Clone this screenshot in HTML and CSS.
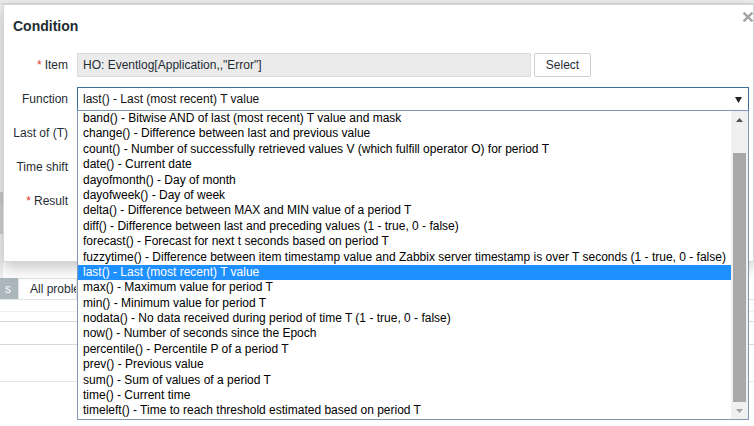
FILE: index.html
```html
<!DOCTYPE html>
<html>
<head>
<meta charset="utf-8">
<link rel="stylesheet" href="styles.css">
</head>
<body>
<div class="page">
  <div class="page-top"></div>
  <div class="page-body">
    <div class="page-side"><span class="side-block"></span><span class="side-mark"></span></div>
  </div>
  <div class="tabs">
    <span class="tab tab-active">s</span>
    <span class="tab tab-clip">All proble</span>
  </div>
  <div class="rows">
    <div class="row-line r1"></div>
    <div class="row-line r2"></div>
    <div class="row-line r3"></div>
    <div class="row-line r4"></div>
  </div>
</div>

<div class="dialog">
  <div class="dialog-head">
    <span class="dialog-title">Condition</span>
    <span class="dialog-close"><svg width="10" height="10" viewBox="0 0 10 10"><path d="M1.5 1.5 L8.5 8.5 M8.5 1.5 L1.5 8.5" stroke="#a3a3a3" stroke-width="2.4" stroke-linecap="square"/></svg></span>
  </div>
  <div class="form">
    <label class="form-label"><span class="req">*</span> Item</label>
    <div class="form-field">
      <div class="text-input readonly">HO: Eventlog[Application,,"Error"]</div>
      <button class="btn">Select</button>
    </div>
    <label class="form-label">Function</label>
    <div class="form-field">
      <div class="select-box">
        <span>last() - Last (most recent) T value</span>
        <svg class="select-arrow" width="7" height="6" viewBox="0 0 7 6"><path d="M0 0 H7 L3.5 6 Z" fill="#222"/></svg>
      </div>
    </div>
    <label class="form-label">Last of (T)</label>
    <div class="form-field"></div>
    <label class="form-label">Time shift</label>
    <div class="form-field"></div>
    <label class="form-label"><span class="req">*</span> Result</label>
    <div class="form-field"></div>
  </div>
</div>

<div class="listbox">
  <ul class="options">
    <li>band() - Bitwise AND of last (most recent) T value and mask</li>
    <li>change() - Difference between last and previous value</li>
    <li>count() - Number of successfully retrieved values V (which fulfill operator O) for period T</li>
    <li>date() - Current date</li>
    <li>dayofmonth() - Day of month</li>
    <li>dayofweek() - Day of week</li>
    <li>delta() - Difference between MAX and MIN value of a period T</li>
    <li>diff() - Difference between last and preceding values (1 - true, 0 - false)</li>
    <li>forecast() - Forecast for next t seconds based on period T</li>
    <li>fuzzytime() - Difference between item timestamp value and Zabbix server timestamp is over T seconds (1 - true, 0 - false)</li>
    <li class="selected">last() - Last (most recent) T value</li>
    <li>max() - Maximum value for period T</li>
    <li>min() - Minimum value for period T</li>
    <li>nodata() - No data received during period of time T (1 - true, 0 - false)</li>
    <li>now() - Number of seconds since the Epoch</li>
    <li>percentile() - Percentile P of a period T</li>
    <li>prev() - Previous value</li>
    <li>sum() - Sum of values of a period T</li>
    <li>time() - Current time</li>
    <li>timeleft() - Time to reach threshold estimated based on period T</li>
  </ul>
  <div class="scrollbar">
    <div class="sb-btn"><svg width="7" height="4" viewBox="0 0 7 4"><path d="M0 4 H7 L3.5 0 Z" fill="#505050"/></svg></div>
    <div class="sb-track"><div class="sb-thumb"></div></div>
    <div class="sb-btn"><svg width="7" height="4" viewBox="0 0 7 4"><path d="M0 0 H7 L3.5 4 Z" fill="#a3a3a3"/></svg></div>
  </div>
</div>
</body>
</html>
```

FILE: styles.css
```css
* { box-sizing: border-box; }
html, body {
  margin: 0;
  padding: 0;
  width: 754px;
  height: 426px;
  overflow: hidden;
  background: #ffffff;
  font-family: "Liberation Sans", Arial, sans-serif;
  font-size: 12px;
  color: #1f2c33;
}

/* background page */
.page { width: 754px; }
.page-top {
  height: 4px;
  background: #ebebeb;
  border-bottom: 1px solid #d8d8d8;
}
.page-body { height: 274px; }
.page-side {
  width: 3px;
  height: 274px;
  background: #eeeeee;
  display: flex;
  flex-direction: column;
}
.side-block {
  display: block;
  height: 12px;
  margin-top: 188px;
  background: #c9c9c9;
}
.side-mark {
  display: block;
  height: 30px;
  background: #d0d0d0;
}
.tabs {
  display: flex;
  height: 22px;
  border-bottom: 1px solid #dfe4e7;
}
.tab {
  display: flex;
  align-items: center;
  padding: 0 11px;
  font-size: 12px;
  color: #1f2c33;
  background: #ffffff;
  border: 1px solid #dfe4e7;
  border-bottom: none;
  white-space: nowrap;
}
.tab-clip {
  width: 59px;
  overflow: hidden;
  padding-right: 0;
}
.tab-active {
  width: 18px;
  background: #acb6bd;
  color: #ffffff;
  padding: 0 0 0 4px;
  border-color: #acb6bd;
}
.rows { width: 100%; }
.row-line { border-bottom: 1px solid #e0e4e6; }
.r1 { height: 12px; border-color: #eeeeee; }
.r2 { height: 10px; border-color: #d3d9dc; }
.r3 { height: 23px; border-color: #d3d9dc; }
.r4 { height: 37px; border-color: #e6e6e6; }

/* dialog (overlay) */
.dialog {
  position: absolute;
  left: 3px;
  top: 4px;
  width: 751px;
  height: 258px;
  background: #ffffff;
  border: 1px solid #d6d6d6;
  box-shadow: 0 6px 14px rgba(0, 0, 0, 0.22);
  padding: 0 4px 0 9px;
}
.dialog-head {
  height: 48px;
  padding-top: 12px;
  line-height: 18px;
  position: relative;
}
.dialog-title {
  font-size: 14px;
  font-weight: bold;
  color: #1f2c33;
}
.dialog-close {
  position: absolute;
  right: -4px;
  top: 7px;
  width: 10px;
  height: 10px;
  display: flex;
}
.form {
  display: grid;
  grid-template-columns: 55px 1fr;
  column-gap: 9px;
  row-gap: 10px;
  grid-auto-rows: 24px;
}
.form-label {
  display: flex;
  align-items: center;
  justify-content: flex-end;
  white-space: nowrap;
  color: #1f2c33;
}
.req { color: #e33734; margin-right: 3px; }
.form-field {
  display: flex;
  gap: 3px;
  align-items: stretch;
}
.text-input {
  width: 454px;
  height: 24px;
  background: #ebebeb;
  border: 1px solid #dcdcdc;
  padding: 0 5px;
  display: flex;
  align-items: center;
  white-space: nowrap;
  color: #1f2c33;
}
.btn {
  width: 57px;
  height: 24px;
  background: #ffffff;
  border: 1px solid #cfcfcf;
  border-radius: 2px;
  font-family: "Liberation Sans", Arial, sans-serif;
  font-size: 12px;
  color: #1f2c33;
  padding: 0;
}
.select-box {
  width: 672px;
  height: 24px;
  border: 1px solid #3c6e97;
  padding: 0 6px 0 5px;
  display: flex;
  align-items: center;
  justify-content: space-between;
  color: #111111;
  white-space: nowrap;
}
.select-arrow { margin-top: 1px; }

/* open dropdown list (overlay) */
.listbox {
  position: absolute;
  left: 77px;
  top: 110px;
  width: 672px;
  height: 310px;
  border: 1px solid #8297b3;
  background: #ffffff;
  display: flex;
}
.options {
  list-style: none;
  margin: 0;
  padding: 0;
  flex: 1;
  overflow: hidden;
}
.options li {
  height: 15.4px;
  line-height: 15.4px;
  padding-left: 5px;
  white-space: nowrap;
  color: #000000;
  font-size: 12px;
}
.options li.selected {
  background: #1e90ff;
  color: #ffffff;
}
.scrollbar {
  width: 17px;
  background: #f0f0f0;
  display: flex;
  flex-direction: column;
}
.sb-btn {
  height: 17px;
  display: flex;
  align-items: center;
  justify-content: center;
}
.sb-track {
  flex: 1;
  padding: 25px 2px 0 2px;
}
.sb-thumb {
  height: 249px;
  background: #a8a8a8;
}
```
